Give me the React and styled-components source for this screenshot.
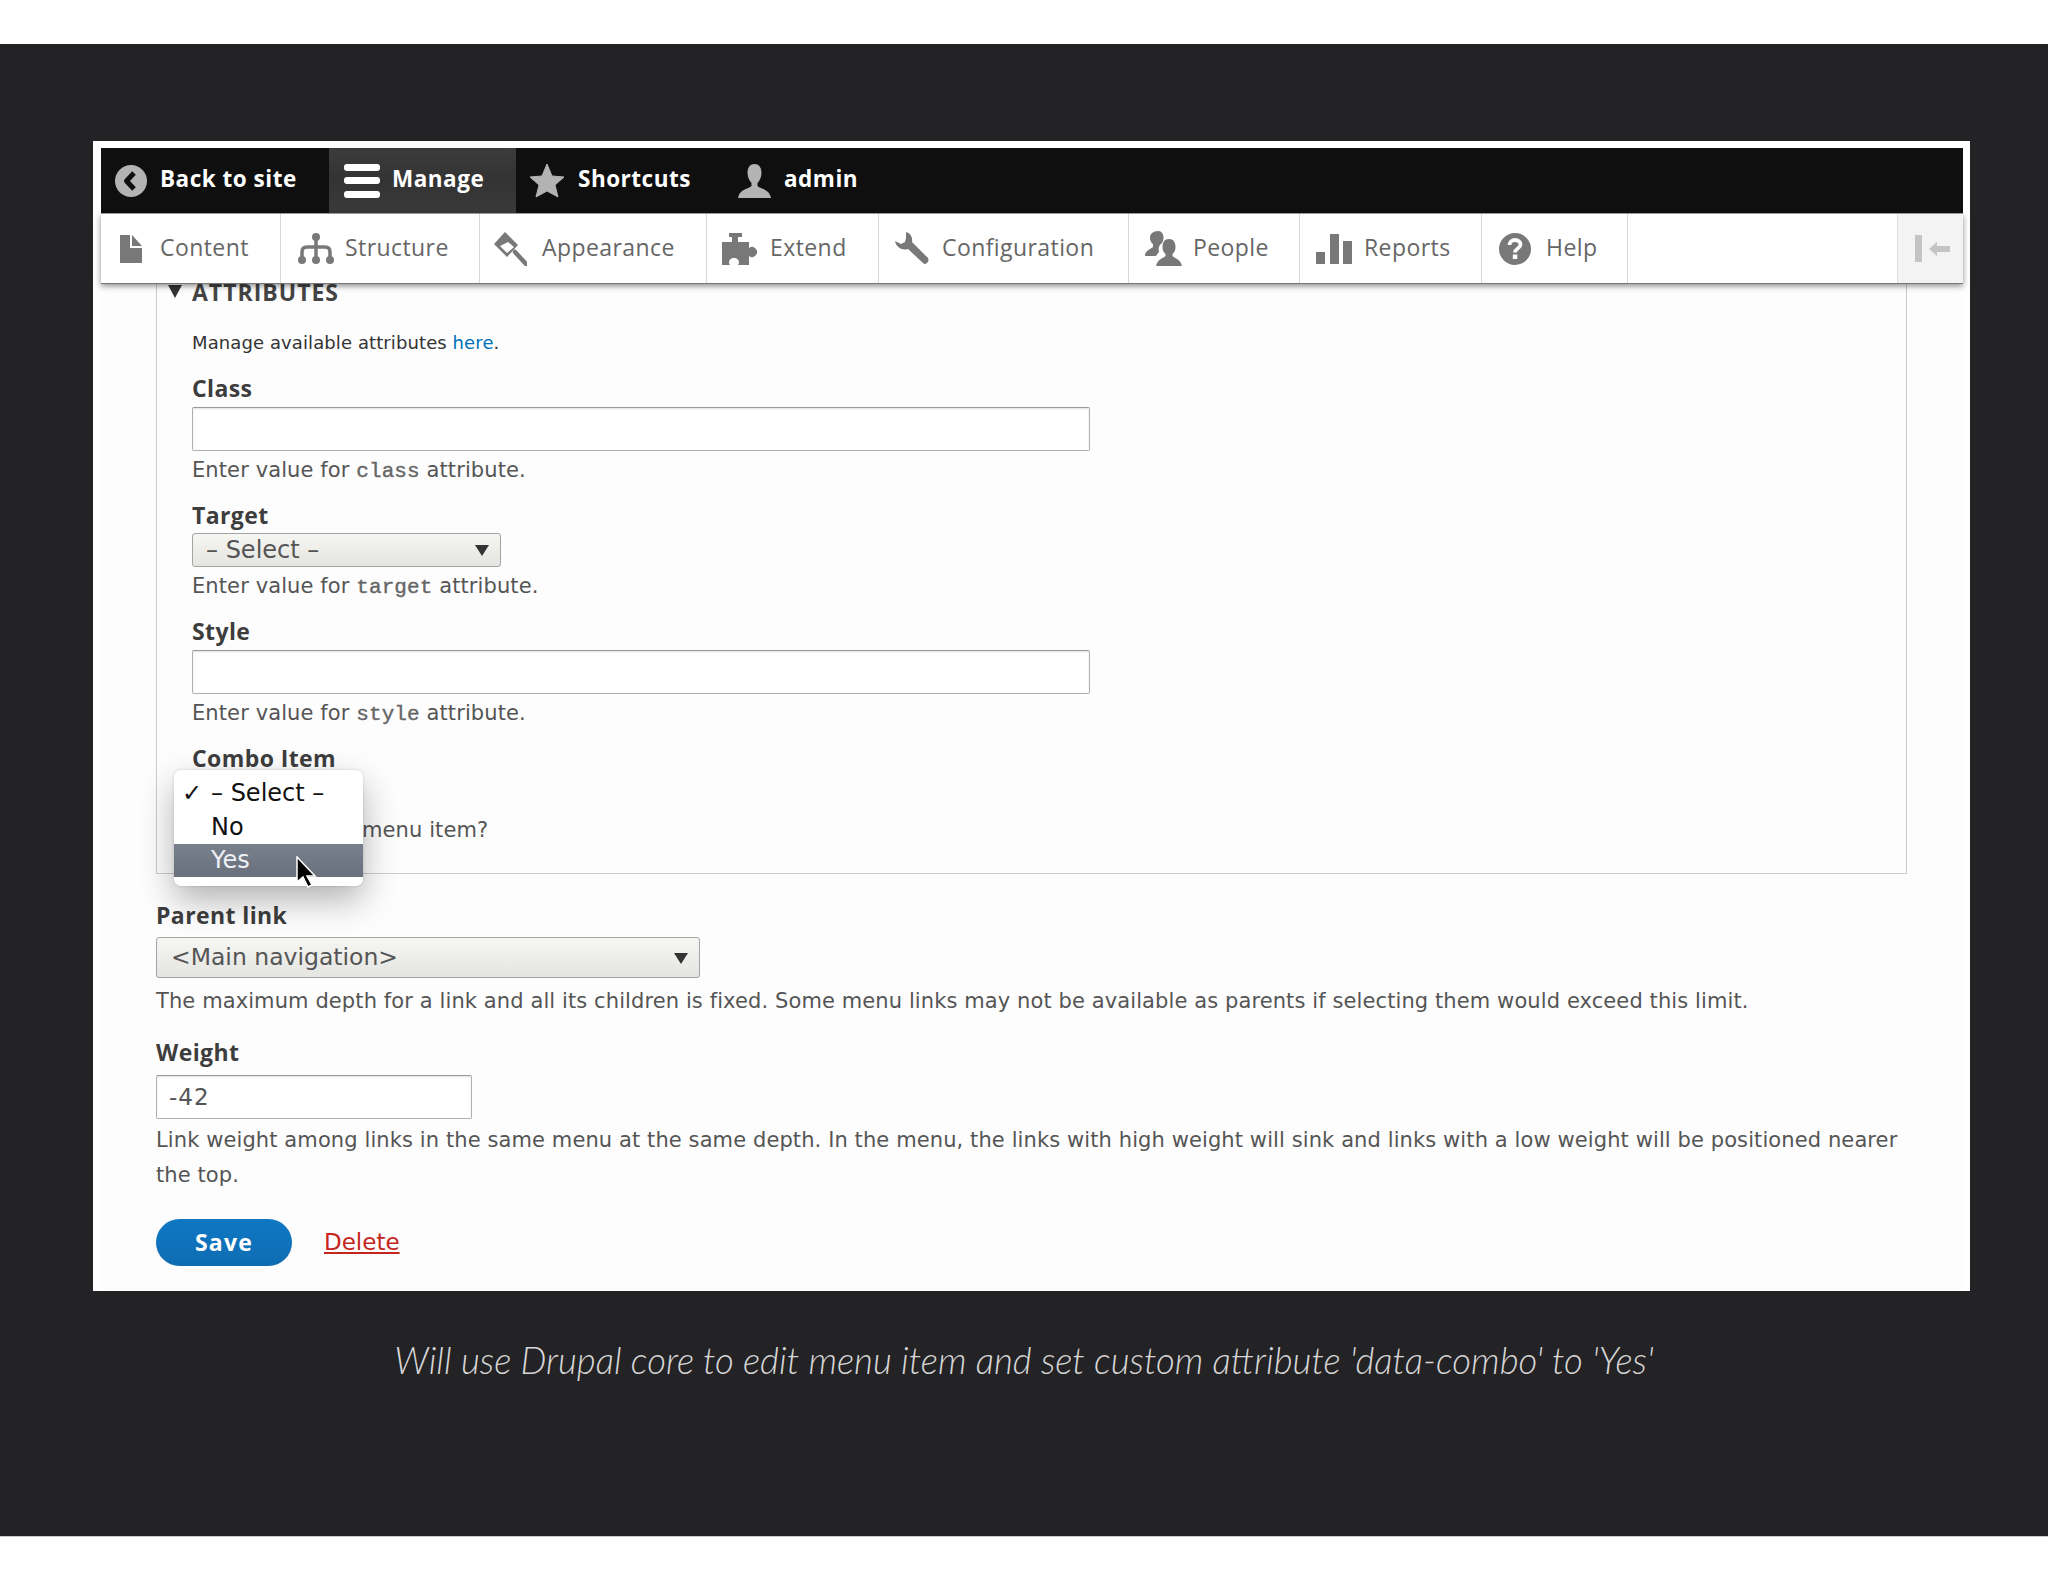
import React from 'react';
import styled, { createGlobalStyle } from 'styled-components';

const Global = createGlobalStyle`
  html, body { margin: 0; padding: 0; background: #fff; }
  * { box-sizing: border-box; }
`;

const Page = styled.div`
  width: 2048px;
  height: 1582px;
  padding-top: 44px;
  background: #fff;
`;
const Stage = styled.div`
  display: flex;
  flex-direction: column;
  height: 1493px;
  padding-top: 97px;
  background: #232225;
  border-bottom: 1px solid #c9c9d2;
`;
const Shot = styled.div`
  width: 1877px;
  height: 1150px;
  margin-left: 93px;
  padding: 7px 7px 0 8px;
  background: #fff;
  overflow: hidden;
`;
const Bar = styled.div`
  display: flex;
  height: 65px;
  background: #0f0f0f;
`;
const BarItem = styled.div`
  display: flex;
  align-items: center;
  gap: ${p => p.$gap}px;
  width: ${p => p.$w}px;
  padding-left: ${p => p.$pad}px;
  background: ${p => (p.$active ? 'linear-gradient(#3c3c3c,#333 50%,#3a3a3a)' : 'transparent')};
  color: #fff;
  font: 700 22.5px "Open Sans", sans-serif;
  letter-spacing: 0.5px;
  white-space: nowrap;
`;
const ItemText = styled.span`
  padding-bottom: 4px;
`;
const Tray = styled.div`
  position: relative;
  z-index: 2;
  display: flex;
  height: 70px;
  background: #fff;
  border-top: 1px solid #999;
  box-shadow: 0 1px 0 #777, 0 3px 6px rgba(0,0,0,.45);
`;
const TrayItem = styled.div`
  display: flex;
  align-items: center;
  gap: ${p => p.$gap}px;
  width: ${p => p.$w}px;
  padding-left: ${p => p.$pad}px;
  border-right: 1px solid #d8d8d8;
  color: #666;
  font: 400 23px "Open Sans", sans-serif;
  letter-spacing: 0.42px;
  white-space: nowrap;
`;
const TrayFill = styled.div`flex: 1;`;
const Toggle = styled.div`
  display: flex;
  align-items: center;
  padding-left: 17px;
  width: 66px;
  background: #f3f3f3;
  border-left: 1px solid #ddd;
`;
const Content = styled.div`
  display: flex;
  flex-direction: column;
  margin-top: -16px;
  padding: 0 56px 26px 55px;
  background: #fdfdfe;
  font: 400 21px/30px "DejaVu Sans", sans-serif;
  color: #555;
`;
const Attributes = styled.div`
  position: relative;
  display: flex;
  flex-direction: column;
  gap: 17px;
  padding: 7px 34px 28px 35px;
  border: 1px solid #ccc;
  border-top: 0;
`;
const Legend = styled.div`
  position: relative;
  height: 37px;
  color: #444;
  font: 700 23px/36px "Open Sans", sans-serif;
  letter-spacing: 1px;
`;
const Triangle = styled.span`
  position: absolute;
  left: -24px;
  top: 11px;
  width: 0; height: 0;
  border-left: 7.5px solid transparent;
  border-right: 7.5px solid transparent;
  border-top: 13px solid #333;
`;
const Intro = styled.div`
  color: #333;
  font-size: 18px;
  letter-spacing: 0.1px;
`;
const Link = styled.a`color: #0071b8;`;
const Field = styled.div`
  display: flex;
  flex-direction: column;
  margin-top: ${p => p.$top || 0}px;
`;
const Label = styled.div`
  height: 30px;
  margin-bottom: 2px;
  color: #3d3d3d;
  font: 700 23px/26px "Open Sans", sans-serif;
  letter-spacing: 0.4px;
`;
const Input = styled.div`
  width: ${p => (p.$short ? 316 : 898)}px;
  height: 44px;
  margin-top: ${p => (p.$short ? 4 : 0)}px;
  padding-left: 12px;
  background: #fff;
  border: 1px solid #b0b0b0;
  border-top-color: #999;
  border-radius: 2px;
  box-shadow: inset 0 1px 2px rgba(0,0,0,.12);
  font-size: 23px;
  letter-spacing: 1px;
  line-height: 42px;
  color: #555;
`;
const Select = styled.div`
  position: relative;
  width: ${p => (p.$wide ? 544 : 309)}px;
  height: ${p => (p.$wide ? 41 : 34)}px;
  margin: ${p => (p.$wide ? '3px 0 4px' : '-1px 0 0')};
  padding-left: ${p => (p.$wide ? 14 : 13)}px;
  background: linear-gradient(#f6f6f3, #e4e4e1);
  border: 1px solid #a3a3a3;
  border-radius: 3px;
  font-size: ${p => (p.$wide ? 23.5 : 24)}px;
  line-height: ${p => (p.$wide ? 39 : 32)}px;
  color: #555;
  &::after {
    content: '';
    position: absolute;
    right: 11px;
    top: 50%;
    margin-top: -5px;
    border-left: 7.5px solid transparent;
    border-right: 7.5px solid transparent;
    border-top: 11px solid #333;
  }
`;
const Desc = styled.div`
  margin-top: 4px;
  line-height: ${p => (p.$tall ? 35 : 30)}px;
  letter-spacing: 0.1px;
`;
const ComboDesc = styled(Desc)`
  margin-top: 38px;
  padding-left: 170px;
`;
const Code = styled.code`
  font: 400 21px "Liberation Mono", monospace;
  -webkit-text-stroke: 0.4px #666;
  color: #666;
`;
const Popup = styled.div`
  position: absolute;
  left: 17px;
  top: 503px;
  width: 189px;
  height: 116px;
  padding-top: 6px;
  background: #fff;
  border-radius: 7px;
  box-shadow: 0 14px 34px rgba(0,0,0,.3), 0 0 3px rgba(0,0,0,.15);
  font: 400 24px/34px "DejaVu Sans", sans-serif;
  color: #111;
  overflow: hidden;
`;
const Option = styled.div`
  position: relative;
  height: ${p => (p.$active ? 33 : 34)}px;
  padding-left: 37px;
  line-height: ${p => (p.$active ? 33 : 34)}px;
  background: ${p => (p.$active ? 'linear-gradient(#78808d,#6a717d)' : 'transparent')};
  color: ${p => (p.$active ? '#eef0f4' : '#111')};
`;
const Tick = styled.span`
  position: absolute;
  left: 8px;
  font-size: 24px;
  font-weight: 700;
`;
const Cursor = styled.svg`
  position: absolute;
  left: 138px;
  top: 589px;
  z-index: 3;
`;
const Actions = styled.div`
  display: flex;
  align-items: center;
  gap: 32px;
  margin-top: 26px;
`;
const Save = styled.div`
  width: 136px;
  height: 47px;
  border-radius: 24px;
  background: linear-gradient(#0f78c4,#0f6cb3);
  color: #fff;
  text-align: center;
  font: 700 23px/47px "Open Sans", sans-serif;
  letter-spacing: 1.2px;
`;
const Delete = styled.a`
  color: #c4261d;
  text-decoration: underline;
  font-size: 23px;
  line-height: 47px;
`;
const Caption = styled.div`
  margin-top: 46px;
  text-align: center;
  color: #d6d6d6;
  font: italic 300 36.6px/46px "Lato", sans-serif;
  white-space: nowrap;
`;

const c1 = '#b3b3b3';
const c2 = '#787878';

const Back = () => <svg width="32" height="32" viewBox="0 0 32 32"><circle cx="16" cy="16" r="16" fill={c1} /><path d="M19 8l-7.500 8 7.500 8" fill="none" stroke="#0f0f0f" strokeWidth="5" strokeLinejoin="round" /></svg>;
const Burger = () => <svg width="36" height="34" viewBox="0 0 36 34"><rect y="0" width="36" height="7" rx="3" fill="#fff" /><rect y="13" width="36" height="7" rx="3" fill="#fff" /><rect y="27" width="36" height="7" rx="3" fill="#fff" /></svg>;
const Star = () => <svg width="34" height="34" viewBox="0 0 34 34"><path d="M17 0l5 12 12 1-9 8 3 12-11-6-11 6 3-12-9-8 12-1z" fill={c1} stroke={c1} strokeLinejoin="round" /></svg>;
const User = () => <svg width="33" height="34" viewBox="0 0 33 34"><path d="M16.500 0c5 0 7 4 7 9 0 4-2 8-4 10v3c3 3 12 3 13.500 12H0c1.500-9 10.500-9 13.500-12v-3c-2-2-4-6-4-10 0-5 2-9 7-9z" fill={c1} /></svg>;
const Doc = () => <svg width="22" height="28" viewBox="0 0 22 28"><path d="M0 0h10v13h12v15H0zM12 0l10 11H12z" fill={c2} /></svg>;
const Sitemap = () => <svg width="36" height="32" viewBox="0 0 36 32"><g fill="none" stroke={c2} strokeWidth="3.500"><path d="M18 4v23" /><path d="M4 27v-8q0-5 5-5h18q5 0 5 5v8" /></g><circle cx="18" cy="4" r="4" fill={c2} /><circle cx="4" cy="27" r="4" fill={c2} /><circle cx="18" cy="27" r="4" fill={c2} /><circle cx="32" cy="27" r="4" fill={c2} /></svg>;
const Hammer = () => <svg width="33" height="34" viewBox="0 0 33 34"><path d="M11 0l13 13-11 12L0 12z" fill={c2} /><path d="M6 14l8-4 6 5-7 6z" fill="#fff" /><path d="M21 20l11 12" stroke={c2} strokeWidth="4.500" strokeLinecap="round" /></svg>;
const Puzzle = () => <svg width="37" height="32" viewBox="0 0 37 32"><path d="M7 0h13v4h-4v5h11v6a5 5 0 1 1 0 8v9H16c2-2 1-7-4-7s-6 5-4 7H0V9h10V4H7z" fill={c2} /></svg>;
const Wrench = () => <svg width="35" height="34" viewBox="0 0 35 34"><path d="M11 0c4 1 7 5 6 10l16 16c2 3-2 8-5 5L13 17C7 19 1 15 0 9l6 3 4-2 1-4z" fill={c2} /></svg>;
const People = () => <svg width="37" height="35" viewBox="0 0 37 35"><path d="M13 0c4 0 5.500 3 5.500 6.500 0 2-.5 4-1.500 5.500-3 2-4 5-3 9-1 1-2 2-3 4H0c0-5 4-6 8-9v-3c-2-1-3-4-3-6.500C5 3 8 0 13 0z" fill={c2} /><path d="M24 8c4.500 0 6.500 3.500 6.500 8 0 3-1 5.500-3 7v2c2 2 8 3 9.500 10H11c1.500-7 7.500-8 9.500-10v-2c-2-1.500-3-4-3-7 0-4.500 2-8 6.500-8z" fill={c2} /></svg>;
const Bars = () => <svg width="36" height="30" viewBox="0 0 36 30"><rect y="18" width="9" height="12" fill={c2} /><rect x="14" y="0" width="9" height="30" fill={c2} /><rect x="27" y="7" width="9" height="23" fill={c2} /></svg>;
const Help = () => <svg width="32" height="32" viewBox="0 0 32 32"><circle cx="16" cy="16" r="16" fill={c2} /><path d="M10.500 12c0-3 2.500-5 5.500-5s5.500 2 5.500 4.500c0 4-5.500 4-5.500 8" fill="none" stroke="#fff" strokeWidth="3.800" /><rect x="13.800" y="21.500" width="4.500" height="4.500" fill="#fff" /></svg>;
const Collapse = () => <svg width="35" height="27" viewBox="0 0 35 27"><rect x="0" y="0" width="7" height="27" fill="#c4c4c4" /><path d="M14 14l8-7v4h13v6H22v4z" fill="#c4c4c4" /></svg>;

const barItems = [
  { t: 'Back to site', I: Back, w: 228, pad: 14, gap: 13 },
  { t: 'Manage', I: Burger, w: 187, pad: 15, gap: 12, active: true },
  { t: 'Shortcuts', I: Star, w: 208, pad: 14, gap: 14 },
  { t: 'admin', I: User, w: 200, pad: 14, gap: 13 },
];
const trayItems = [
  { t: 'Content', I: Doc, w: 180, pad: 19, gap: 18 },
  { t: 'Structure', I: Sitemap, w: 199, pad: 17, gap: 11 },
  { t: 'Appearance', I: Hammer, w: 227, pad: 14, gap: 15 },
  { t: 'Extend', I: Puzzle, w: 172, pad: 15, gap: 11 },
  { t: 'Configuration', I: Wrench, w: 250, pad: 16, gap: 12 },
  { t: 'People', I: People, w: 171, pad: 16, gap: 11 },
  { t: 'Reports', I: Bars, w: 182, pad: 16, gap: 12 },
  { t: 'Help', I: Help, w: 146, pad: 17, gap: 15 },
];

export default function App() {
  return (
    <Page>
      <Global />
      <Stage>
        <Shot>
          <Bar>
            {barItems.map(({ t, I, w, pad, gap, active }) => (
              <BarItem key={t} $w={w} $pad={pad} $gap={gap} $active={active}><I /><ItemText>{t}</ItemText></BarItem>
            ))}
          </Bar>
          <Tray>
            {trayItems.map(({ t, I, w, pad, gap }) => (
              <TrayItem key={t} $w={w} $pad={pad} $gap={gap}><I /><ItemText>{t}</ItemText></TrayItem>
            ))}
            <TrayFill />
            <Toggle><Collapse /></Toggle>
          </Tray>
          <Content>
            <Attributes>
              <Legend><Triangle />ATTRIBUTES</Legend>
              <Intro>Manage available attributes <Link>here</Link>.</Intro>
              <Field>
                <Label>Class</Label>
                <Input />
                <Desc>Enter value for <Code>class</Code> attribute.</Desc>
              </Field>
              <Field>
                <Label>Target</Label>
                <Select>– Select –</Select>
                <Desc>Enter value for <Code>target</Code> attribute.</Desc>
              </Field>
              <Field>
                <Label>Style</Label>
                <Input />
                <Desc>Enter value for <Code>style</Code> attribute.</Desc>
              </Field>
              <Field>
                <Label>Combo Item</Label>
                <ComboDesc>menu item?</ComboDesc>
              </Field>
              <Popup>
                <Option><Tick>✓</Tick>– Select –</Option>
                <Option>No</Option>
                <Option $active>Yes</Option>
              </Popup>
              <Cursor width="22" height="32" viewBox="0 0 22 32">
                <path d="M2 1v25l6-5 5 10 4-2-5-9h8z" fill="#000" stroke="#fff" strokeWidth="1.500" />
              </Cursor>
            </Attributes>
            <Field $top={28}>
              <Label>Parent link</Label>
              <Select $wide>&lt;Main navigation&gt;</Select>
              <Desc>The maximum depth for a link and all its children is fixed. Some menu links may not be available as parents if selecting them would exceed this limit.</Desc>
            </Field>
            <Field $top={23}>
              <Label>Weight</Label>
              <Input $short>-42</Input>
              <Desc $tall>Link weight among links in the same menu at the same depth. In the menu, the links with high weight will sink and links with a low weight will be positioned nearer the top.</Desc>
            </Field>
            <Actions>
              <Save>Save</Save>
              <Delete>Delete</Delete>
            </Actions>
          </Content>
        </Shot>
        <Caption>Will use Drupal core to edit menu item and set custom attribute 'data-combo' to 'Yes'</Caption>
      </Stage>
    </Page>
  );
}
